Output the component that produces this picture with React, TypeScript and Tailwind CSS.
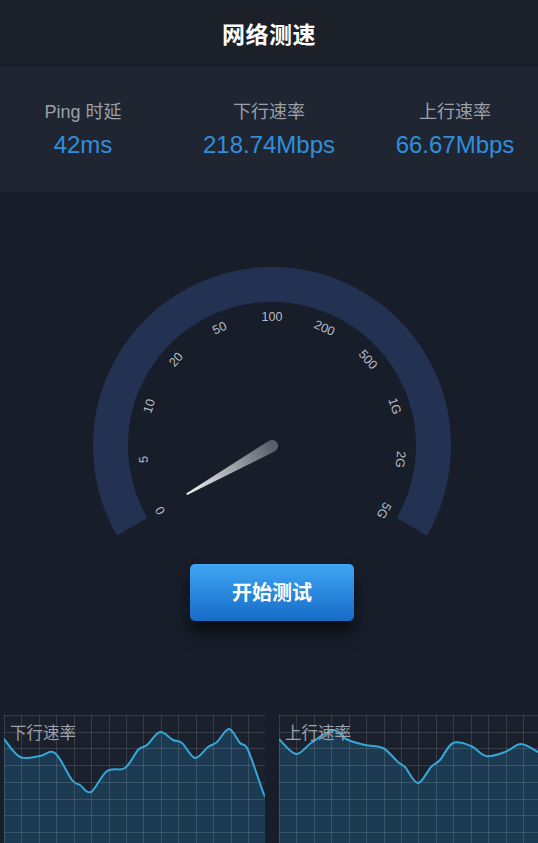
import React from "react";

const FONT = { fontFamily: '"Liberation Sans", "Noto Sans CJK SC", sans-serif' };

const LABELS = ["0", "5", "10", "20", "50", "100", "200", "500", "1G", "2G", "5G"];

// gauge geometry (svg coords, svg top = page y 192)
const CX = 272;
const CY = 254;
const R_BAND = 161.5;
const R_LABEL = 129;

function polar(r: number, deg: number) {
  const a = (deg * Math.PI) / 180;
  return { x: CX + r * Math.sin(a), y: CY - r * Math.cos(a) };
}

function Gauge() {
  const s = polar(R_BAND, -120);
  const e = polar(R_BAND, 120);
  return (
    <svg width="538" height="350" viewBox="0 0 538 350" className="block">
      <defs>
        <linearGradient id="needle" gradientUnits="userSpaceOnUse" x1="0" y1="0" x2="0" y2="-98">
          <stop offset="0" stopColor="#5a5f69" />
          <stop offset="1" stopColor="#f2f4f7" />
        </linearGradient>
      </defs>
      <path
        d={`M ${s.x} ${s.y} A ${R_BAND} ${R_BAND} 0 1 1 ${e.x} ${e.y}`}
        fill="none"
        stroke="#233152"
        strokeWidth="35"
      />
      {LABELS.map((t, i) => {
        const deg = -120 + i * 24;
        const p = polar(R_LABEL, deg);
        return (
          <text
            key={t}
            x={p.x}
            y={p.y}
            fill="#b9bdc5"
            fontSize="12.5"
            textAnchor="middle"
            dominantBaseline="central"
            transform={`rotate(${deg} ${p.x} ${p.y})`}
            style={FONT}
          >
            {t}
          </text>
        );
      })}
      <g transform={`translate(${CX} ${CY}) rotate(-119.5)`}>
        <path d="M -6 0 L -0.9 -98 L 0.9 -98 L 6 0 A 6 6 0 0 1 -6 0 Z" fill="url(#needle)" />
      </g>
    </svg>
  );
}

type Pt = [number, number];

const DOWN: Pt[] = [
  [0, 24], [16, 42], [36, 41], [51, 38], [68, 65], [76, 70], [87, 77], [103, 56], [121, 53],
  [134, 35], [143, 30], [156, 17], [169, 25], [178, 28], [191, 43], [204, 32], [213, 27],
  [225, 14], [236, 28], [244, 35], [259, 77], [261, 80],
];

const UP: Pt[] = [
  [0, 24], [17, 39], [32, 28], [54, 15], [67, 24], [86, 30], [104, 33], [119, 47], [126, 52],
  [139, 68], [152, 52], [161, 45], [174, 28], [192, 31], [207, 41], [226, 37], [242, 29],
  [259, 37], [261, 38],
];

function smooth(pts: Pt[]) {
  let d = `M ${pts[0][0]} ${pts[0][1]}`;
  for (let i = 0; i < pts.length - 1; i++) {
    const p0 = pts[i - 1] || pts[i];
    const p1 = pts[i];
    const p2 = pts[i + 1];
    const p3 = pts[i + 2] || p2;
    const c1x = p1[0] + (p2[0] - p0[0]) / 6;
    const c1y = p1[1] + (p2[1] - p0[1]) / 6;
    const c2x = p2[0] - (p3[0] - p1[0]) / 6;
    const c2y = p2[1] - (p3[1] - p1[1]) / 6;
    d += ` C ${c1x} ${c1y} ${c2x} ${c2y} ${p2[0]} ${p2[1]}`;
  }
  return d;
}

const W = 261;
const H = 140;

function Chart({ label, points }: { label: string; points: Pt[] }) {
  const line = smooth(points);
  const last = points[points.length - 1];
  const area = `${line} L ${last[0]} ${H} L 0 ${H} Z`;
  const vx = Array.from({ length: 16 }, (_, i) => Math.round(i * 17.43) + 0.5);
  const hy = Array.from({ length: 9 }, (_, i) => Math.round(i * 16.7) + 0.5);
  return (
    <div className="relative w-[261px] h-[140px] shrink-0 bg-[#1a212d]">
      <svg width={W} height={H} viewBox={`0 0 ${W} ${H}`} className="block">
        <path d={area} fill="#1c3a51" />
        {vx.map((x) => (
          <line key={`v${x}`} x1={x} y1="0" x2={x} y2={H} stroke="#ffffff" strokeOpacity="0.13" />
        ))}
        {hy.map((y) => (
          <line key={`h${y}`} x1="0" y1={y} x2={W} y2={y} stroke="#ffffff" strokeOpacity="0.13" />
        ))}
        <path d={line} fill="none" stroke="#35a7d8" strokeWidth="2" />
      </svg>
      <span className="absolute left-[6px] top-[8px] text-[16.5px] leading-[20px] text-[#9da2aa]" style={FONT}>
        {label}
      </span>
    </div>
  );
}

function Stat({ label, value }: { label: string; value: string }) {
  return (
    <div className="flex flex-col items-center">
      <span className="text-[18px] leading-[24px] text-[#9ba0a8]">{label}</span>
      <span className="mt-[6px] text-[24px] leading-[30px] text-[#2f8fdc]">{value}</span>
    </div>
  );
}

export default function App() {
  return (
    <div className="w-[538px] h-[843px] overflow-hidden bg-[#171e2a]" style={FONT}>
      {/* title bar */}
      <div className="h-[66px] flex items-center justify-center pt-[5px] bg-[#1b2029] border-b border-[#141922]">
        <h1 className="text-[23px] font-bold text-white tracking-[0.5px]">网络测速</h1>
      </div>

      {/* stats */}
      <div className="h-[126px] bg-[#1f2632] grid grid-cols-[166px_206px_166px] pt-[34px]">
        <Stat label="Ping 时延" value="42ms" />
        <Stat label="下行速率" value="218.74Mbps" />
        <Stat label="上行速率" value="66.67Mbps" />
      </div>

      {/* gauge */}
      <Gauge />

      <div className="mt-[22px] ml-[190px]">
        <button className="w-[164px] h-[57px] rounded-[5px] bg-gradient-to-b from-[#3fa6f3] to-[#176bc7] text-white text-[20px] font-bold shadow-[0_12px_16px_rgba(0,0,0,0.55)]">
          开始测试
        </button>
      </div>

      {/* charts */}
      <div className="mt-[94px] flex gap-[14px] pl-[4px]">
        <Chart label="下行速率" points={DOWN} />
        <Chart label="上行速率" points={UP} />
      </div>
    </div>
  );
}
